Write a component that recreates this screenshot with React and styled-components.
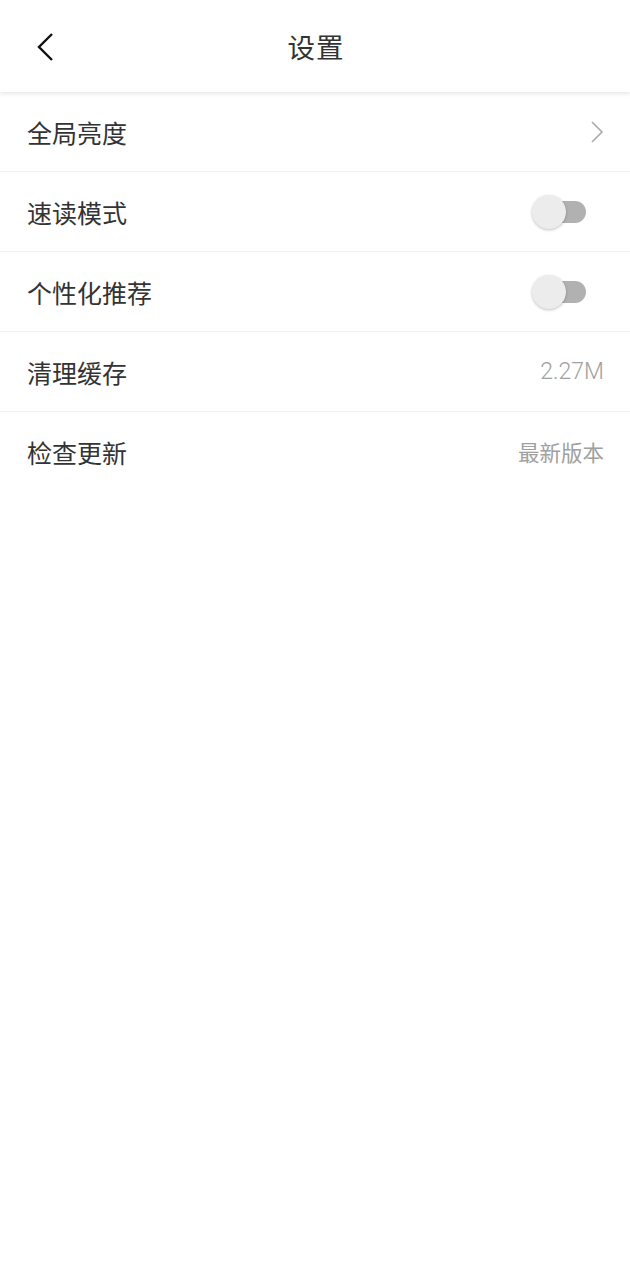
import React, { useState } from "react"
import styled, { createGlobalStyle } from "styled-components"

const GlobalStyle = createGlobalStyle`
  html, body {
    margin: 0;
    padding: 0;
    background: #fff;
  }
  body {
    font-family: "Noto Sans CJK SC", "Noto Sans", sans-serif;
  }
`

const Page = styled.div`
  width: 630px;
  min-height: 1280px;
  background: #fff;
`

const Header = styled.div`
  position: relative;
  height: 92px;
  display: flex;
  align-items: center;
  justify-content: center;
  background: #fff;
  box-shadow: 0 2px 4px rgba(0, 0, 0, 0.09);
  z-index: 1;
`

const BackButton = styled.div`
  position: absolute;
  left: 35px;
  top: 30px;
  width: 26px;
  height: 34px;
  display: flex;
  align-items: center;
`

const Title = styled.div`
  font-size: 27.5px;
  color: #333;
  letter-spacing: 1px;
  padding-left: 2px;
`

const List = styled.div`
  display: flex;
  flex-direction: column;
`

const Row = styled.div`
  height: 79px;
  display: flex;
  align-items: center;
  justify-content: space-between;
  padding: 0 26px 0 27px;
  border-bottom: 1px solid #f0f0f0;
  &:last-child {
    border-bottom: none;
  }
`

const Label = styled.div`
  font-size: 25px;
  color: #333;
`

const Value = styled.div`
  font-size: ${props => (props.small ? "21.5px" : "23px")};
  color: #a0a0a0;
  font-family: ${props =>
    props.small
      ? `"Noto Sans CJK SC", sans-serif`
      : `Roboto, "Noto Sans", sans-serif`};
  font-weight: ${props => (props.small ? 400 : 300)};
`

const Track = styled.div`
  position: relative;
  width: 38px;
  height: 22px;
  border-radius: 11px;
  background: ${props => (props.on ? "#f5a623" : "#b1b1b1")};
  margin-right: 18px;
`

const Knob = styled.div`
  position: absolute;
  top: -6px;
  left: ${props => (props.on ? "22px" : "-16px")};
  width: 34px;
  height: 34px;
  border-radius: 50%;
  background: #ececec;
  box-shadow: 0 1px 3px rgba(0, 0, 0, 0.25);
`

function Toggle({ on, onClick }) {
  return (
    <Track on={on} onClick={onClick}>
      <Knob on={on} />
    </Track>
  )
}

export default function App() {
  const [speed, setSpeed] = useState(false)
  const [personal, setPersonal] = useState(false)

  return (
    <Page>
      <GlobalStyle />
      <Header>
        <BackButton>
          <svg width="22" height="32" viewBox="0 0 22 32">
            <path
              d="M17 3 L4 16 L17 29"
              fill="none"
              stroke="#111"
              strokeWidth="2.4"
            />
          </svg>
        </BackButton>
        <Title>设置</Title>
      </Header>
      <List>
        <Row>
          <Label>全局亮度</Label>
          <svg width="14" height="24" viewBox="0 0 14 24">
            <path
              d="M2 2 L12 12 L2 22"
              fill="none"
              stroke="#aaa"
              strokeWidth="1.6"
            />
          </svg>
        </Row>
        <Row>
          <Label>速读模式</Label>
          <Toggle on={speed} onClick={() => setSpeed(s => !s)} />
        </Row>
        <Row>
          <Label>个性化推荐</Label>
          <Toggle on={personal} onClick={() => setPersonal(p => !p)} />
        </Row>
        <Row>
          <Label>清理缓存</Label>
          <Value>2.27M</Value>
        </Row>
        <Row>
          <Label>检查更新</Label>
          <Value small>最新版本</Value>
        </Row>
      </List>
    </Page>
  )
}
